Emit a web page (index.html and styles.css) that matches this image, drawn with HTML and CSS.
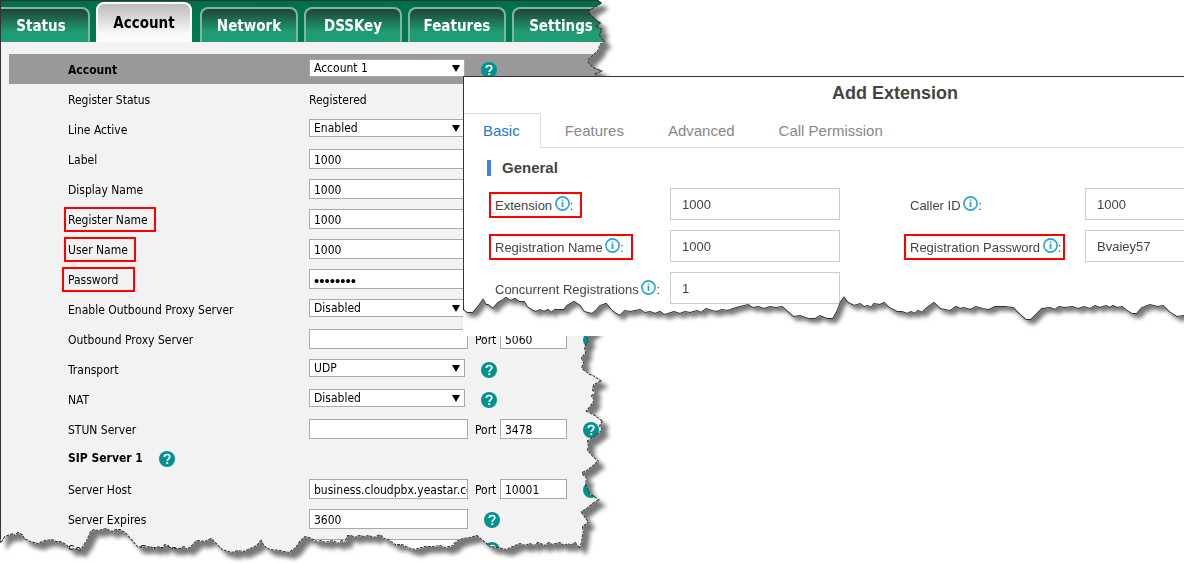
FILE: index.html
```html
<!DOCTYPE html>
<html lang="en">
<head>
<meta charset="utf-8">
<title>Extension registration</title>
<link rel="stylesheet" href="styles.css">
</head>
<body>
<svg class="defs" aria-hidden="true">
  <defs>
    <path id="phone-edge" d="M0 0H598L602 3L596 7L589 11L591 15L598 21L601 23L597 26L602 29L600 35L605 42L600 45L599 50L592 57L588 61L593 67L603 71L596 74L600 80V325L587 336L589 341L585 347L586 353L582 358L584 363L582 368L590 374L593 375L602 381L594 385L593 390L596 393L592 396L595 400L591 406L587 411L595 415L603 421L600 426L603 430L598 434L593 438L588 441L589 447L588 450L594 457L599 461L592 467L587 471L582 473L587 478L586 484L590 493L600 500L594 503L588 508L582 512L586 518L589 522L583 527L584 531L583 535L582 542L580 549L575 543L571 546L568 544L564 546L560 543L552 545L549 543L545 546L538 543L534 546L530 544L525 546L520 544L513 547L506 550L498 548L490 547L484 542L477 536L470 538L463 539L456 542L453 546L445 548L440 546L433 547L425 547L415 550L408 548L402 545L395 545L388 540L384 539L380 535L374 538L369 536L364 537L359 536L355 538L351 536L348 536L345 543L342 541L338 544L333 541L325 543L321 541L317 542L309 538L305 537L300 542L296 548L289 553L280 551L270 550L266 548L263 545L261 541L257 546L250 549L244 552L238 551L232 553L222 550L215 543L211 539L205 542L197 541L192 546L187 550L184 547L180 549L172 549L165 545L162 549L158 547L154 549L150 547L142 548L137 547L132 541L125 533L120 530L116 530L112 532L106 529L98 531L94 530L91 532L87 541L83 547L80 551L75 549L70 550L66 545L60 542L56 542L52 540L45 541L38 544L30 542L24 539L22 535L18 533L15 536L13 534L5 537L2 542L0 543Z"/>
    <path id="pbx-edge" transform="translate(-463 -76)" d="M463 76H1500V316H1184L1177 317L1169 312L1163 306L1157 307L1150 305L1142 308L1137 314L1132 314L1127 311L1122 307L1117 308L1113 306L1110 308L1106 306L1100 308L1095 306L1090 309L1084 307L1078 309L1072 307L1065 308L1059 307L1055 310L1050 308L1042 309L1037 314L1031 320L1026 320L1020 315L1013 308L1005 307L995 307L989 310L982 309L976 307L970 310L964 308L960 309L956 307L950 311L945 310L940 309L934 303L927 308L922 313L918 311L915 314L911 312L907 314L902 312L897 312L889 308L884 303L880 305L874 304L871 308L868 306L864 307L860 304L854 306L848 303L844 298L841 302L837 312L833 319L827 319L820 316L815 319L808 319L800 316L793 317L790 314L782 307L776 308L770 307L764 309L758 307L753 308L748 305L740 307L733 309L728 311L722 310L717 312L712 311L706 309L701 313L697 311L690 313L685 312L680 314L674 312L668 314L664 315L660 312L655 314L650 312L645 313L640 310L635 311L630 312L625 311L620 316L616 314L611 310L606 304L600 306L597 310L592 314L584 312L580 306L574 302L567 306L564 310L560 310L555 310L551 313L548 310L544 312L540 310L536 312L533 311L527 307L524 302L519 302L515 299L511 301L506 298L503 300L498 303L493 309L488 305L486 305L483 300L478 307L473 313L467 313L463 310Z"/>
    <clipPath id="phone-clip"><use href="#phone-edge"/></clipPath>
    <clipPath id="pbx-clip"><use href="#pbx-edge"/></clipPath>
    <symbol id="help" viewBox="0 0 16 16">
      <circle cx="8" cy="8" r="8" fill="#009191"/>
      <path d="M5.3 6.1C5.3 4.5 6.5 3.5 8.1 3.5S10.8 4.4 10.8 5.8C10.8 7.7 8.2 7.8 8.2 10" fill="none" stroke="#fff" stroke-width="1.7"/>
      <rect x="7.3" y="11.2" width="1.9" height="1.9" fill="#fff"/>
    </symbol>
    <symbol id="info" viewBox="0 0 15 15">
      <circle cx="7.5" cy="7.5" r="6.6" fill="none" stroke="#2aa5d6" stroke-width="1.6"/>
      <path d="M7.5 5.8V11M7.5 3.4V4.8" stroke="#2aa5d6" stroke-width="1.8"/>
    </symbol>
  </defs>
</svg>

<main class="page">
  <div class="phone-shadow">
    <section class="phone">
      <nav class="tabs">
        <button class="tab">Status</button>
        <button class="tab tab-active">Account</button>
        <button class="tab">Network</button>
        <button class="tab">DSSKey</button>
        <button class="tab">Features</button>
        <button class="tab">Settings</button>
      </nav>
      <form class="rows">
        <div class="row row-head">
          <label class="name" for="account">Account</label>
          <span class="pick"><select id="account"><option>Account 1</option></select></span>
          <svg class="help"><use href="#help"/></svg>
        </div>
        <div class="row"><span class="name">Register Status</span><span class="value">Registered</span></div>
        <div class="row">
          <label class="name" for="active">Line Active</label>
          <span class="pick"><select id="active"><option>Enabled</option></select></span>
        </div>
        <div class="row"><label class="name" for="label">Label</label><input class="text" id="label" value="1000"></div>
        <div class="row"><label class="name" for="display">Display Name</label><input class="text" id="display" value="1000"></div>
        <div class="row"><label class="name" for="register"><span class="mark">Register Name</span></label><input class="text" id="register" value="1000"></div>
        <div class="row"><label class="name" for="user"><span class="mark">User Name</span></label><input class="text" id="user" value="1000"></div>
        <div class="row"><label class="name" for="password"><span class="mark mark-wide">Password</span></label><input class="text secret" id="password" type="password" value="12345678"></div>
        <div class="row">
          <label class="name" for="proxy-on">Enable Outbound Proxy Server</label>
          <span class="pick"><select id="proxy-on"><option>Disabled</option></select></span>
        </div>
        <div class="row">
          <label class="name" for="proxy">Outbound Proxy Server</label><input class="text" id="proxy">
          <label class="port-name" for="proxy-port">Port</label><input class="text port" id="proxy-port" value="5060">
          <svg class="help"><use href="#help"/></svg>
        </div>
        <div class="row">
          <label class="name" for="transport">Transport</label>
          <span class="pick"><select id="transport"><option>UDP</option></select></span>
          <svg class="help"><use href="#help"/></svg>
        </div>
        <div class="row">
          <label class="name" for="nat">NAT</label>
          <span class="pick"><select id="nat"><option>Disabled</option></select></span>
          <svg class="help"><use href="#help"/></svg>
        </div>
        <div class="row">
          <label class="name" for="stun">STUN Server</label><input class="text" id="stun">
          <label class="port-name" for="stun-port">Port</label><input class="text port" id="stun-port" value="3478">
          <svg class="help"><use href="#help"/></svg>
        </div>
        <div class="row row-section"><strong>SIP Server 1</strong><svg class="help"><use href="#help"/></svg></div>
        <div class="row">
          <label class="name" for="host">Server Host</label><input class="text" id="host" value="business.cloudpbx.yeastar.com">
          <label class="port-name" for="host-port">Port</label><input class="text port" id="host-port" value="10001">
          <svg class="help"><use href="#help"/></svg>
        </div>
        <div class="row">
          <label class="name" for="expires">Server Expires</label><input class="text" id="expires" value="3600">
          <svg class="help"><use href="#help"/></svg>
        </div>
        <div class="row">
          <label class="name" for="retry">Server Retry Counts</label><input class="text" id="retry">
          <svg class="help"><use href="#help"/></svg>
        </div>
      </form>
      <svg class="edge" aria-hidden="true">
        <use class="edge-dashed" href="#phone-edge"/>
        <path d="M0 537V0H598"/>
      </svg>
    </section>
  </div>

  <div class="overlay">
    <div class="pbx-shadow">
      <section class="pbx">
        <h1 class="title">Add Extension</h1>
        <nav class="pbx-tabs">
          <button class="pbx-tab pbx-tab-active">Basic</button>
          <button class="pbx-tab">Features</button>
          <button class="pbx-tab">Advanced</button>
          <button class="pbx-tab">Call Permission</button>
        </nav>
        <h2 class="group">General</h2>
        <form class="fields">
          <label for="ext"><span class="mark pbx-mark">Extension <svg class="info"><use href="#info"/></svg>:</span></label>
          <input class="box" id="ext" value="1000">
          <label class="second" for="caller">Caller ID <svg class="info"><use href="#info"/></svg>:</label>
          <input class="box" id="caller" value="1000">
          <label for="reg-name"><span class="mark pbx-mark">Registration Name <svg class="info"><use href="#info"/></svg>:</span></label>
          <input class="box" id="reg-name" value="1000">
          <label class="second" for="reg-pass"><span class="mark pbx-mark pbx-mark-tight">Registration Password <svg class="info"><use href="#info"/></svg>:</span></label>
          <input class="box" id="reg-pass" value="Bvaiey57">
          <label for="concurrent">Concurrent Registrations <svg class="info"><use href="#info"/></svg>:</label>
          <input class="box" id="concurrent" value="1">
        </form>
        <svg class="edge" aria-hidden="true"><use href="#pbx-edge"/></svg>
      </section>
    </div>
  </div>
</main>
</body>
</html>
```
FILE: styles.css
```css
* { box-sizing: border-box; }

body {
  margin: 0;
  background: #fff;
  color: #000;
  font: 12px/16px "DejaVu Sans Condensed", "DejaVu Sans", sans-serif;
}

button, input, select { font: inherit; color: inherit; margin: 0; }

.defs { position: absolute; width: 0; height: 0; }

.page { position: relative; height: 100vh; overflow: hidden; }

/* Phone settings sheet */
.phone-shadow { width: 620px; filter: drop-shadow(6px 6px 2px #777); }

.phone {
  position: relative;
  background: #f2f2f2;
  clip-path: url(#phone-clip);
}

.tabs {
  display: flex;
  align-items: flex-end;
  gap: 6px;
  height: 42px;
  background: linear-gradient(#006e48, #007c54);
  overflow: hidden;
}

.tab {
  flex: none;
  width: 98px;
  height: 35px;
  padding: 0;
  border: 2px solid #84b5a0;
  border-bottom: 0;
  border-radius: 8px 8px 0 0;
  background: linear-gradient(#1f4434, #1f9c75 70%);
  color: #fff;
  font-size: 15px;
  font-weight: bold;
}

.tab:first-child { margin-left: -8px; }

.tab-active {
  width: 96px;
  height: 40px;
  margin-right: 2px;
  border-color: #fff;
  background: linear-gradient(#bcbcbc, #fafafa 80%);
  color: #000;
}

.rows { padding: 12px 0 0 9px; }

.row {
  display: flex;
  align-items: center;
  height: 30px;
  padding-left: 59px;
}

.row-head { background: #999; }
.row-head .name { font-weight: bold; }

.name { flex: none; width: 241px; }
.name, .value, .port-name { padding-top: 2px; }

.pick { position: relative; width: 156px; height: 18px; margin-bottom: 2px; }

.pick select {
  display: block;
  width: 100%;
  height: 18px;
  padding: 0 4px;
  border: 1px solid #a9a9a9;
  border-radius: 0;
  background: #fff;
  appearance: none;
}

.pick::after {
  content: "";
  position: absolute;
  top: 6px;
  right: 5px;
  width: 8px;
  height: 7px;
  background: #000;
  clip-path: polygon(0 0, 100% 0, 50% 100%);
}

.text {
  flex: none;
  width: 159px;
  height: 20px;
  padding: 2px 0 0 4px;
  border: 1px solid #a9a9a9;
  border-radius: 0;
  background: #fff;
}

.secret { font-family: "Liberation Sans", Arial, sans-serif; font-size: 15px; }

.port { width: 67px; }
.port-name { width: 25px; margin-left: 7px; }

.help { flex: none; width: 16px; height: 16px; margin: 2px 0 0 16px; }

.row-section { padding-bottom: 2px; }

.mark {
  display: inline-block;
  margin: -2px 0 0 -4px;
  padding: 3px 6px 2px 2px;
  border: 2px solid #f00;
}

.mark-wide { margin-left: -6px; padding-right: 15px; padding-left: 4px; }

.edge {
  position: absolute;
  top: 0;
  left: 0;
  width: 100%;
  height: 100%;
  overflow: visible;
  fill: none;
  stroke: #333;
  stroke-width: 2;
  pointer-events: none;
}

.edge-dashed { stroke-dasharray: 3 1; }

/* PBX dialog */
.overlay {
  position: absolute;
  top: 76px;
  left: 463px;
  right: 0;
  overflow: hidden;
  background: #fff;
  font-family: "Liberation Sans", Arial, sans-serif;
}

.pbx-shadow { width: 864px; filter: drop-shadow(4px 4px 2px #777); }

.pbx {
  position: relative;
  padding: 1px 0 32px;
  background: #fff;
  color: #444;
  clip-path: url(#pbx-clip);
}

.title {
  margin: 0 0 4px;
  font-size: 18px;
  line-height: 32px;
  text-align: center;
}

.pbx-tabs { display: flex; gap: 4px; height: 35px; border-bottom: 1px solid #ddd; }

.pbx-tab {
  height: 35px;
  padding: 0 20px;
  border: 0;
  background: none;
  color: #888;
  font-size: 15px;
}

.pbx-tab-active {
  border-top: 1px solid #ddd;
  border-right: 1px solid #ddd;
  background: #fff;
  color: #2077cc;
}

.group {
  margin: 12px 0 12px 24px;
  padding-left: 11px;
  border-left: 4px solid #3a87d6;
  font-size: 15px;
  line-height: 16px;
}

.fields {
  display: grid;
  grid-template-columns: 175px 170px 245px 170px;
  grid-auto-rows: 32px;
  row-gap: 10px;
  align-items: center;
  padding-left: 32px;
  font-size: 13px;
}

.fields label { padding-top: 2px; white-space: nowrap; }
.fields .second { padding-left: 70px; }

.pbx-mark { margin: 0 0 0 -6px; padding: 2px 7px 2px 4px; }
.pbx-mark-tight { padding-right: 2px; }

.info { width: 15px; height: 15px; margin-left: -1px; vertical-align: -1px; }

.box {
  width: 170px;
  height: 32px;
  padding: 0 11px;
  border: 1px solid #ccc;
  border-radius: 0;
  background: #fff;
}
```
